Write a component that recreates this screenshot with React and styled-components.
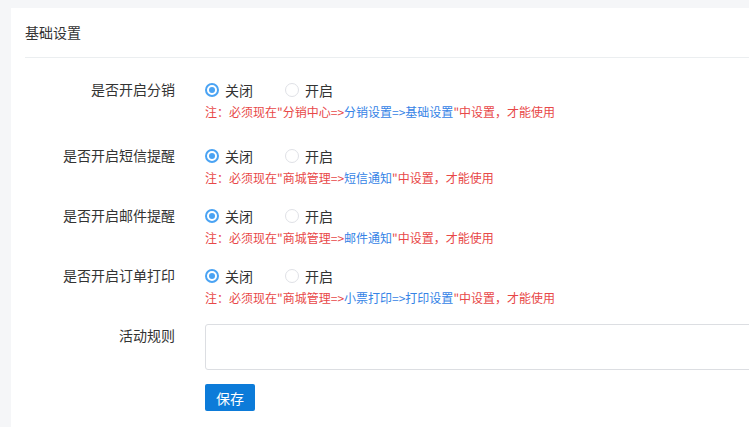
import React from 'react';
import styled, { createGlobalStyle } from 'styled-components';

const GlobalStyle = createGlobalStyle`
  html, body {
    margin: 0;
    padding: 0;
    background: #f5f6f8;
    overflow: hidden;
  }
  body {
    font-family: "Noto Sans CJK SC", "Liberation Sans", sans-serif;
    color: #333;
  }
`;

const Page = styled.div`
  padding: 8px 0 0 11px;
  height: 427px;
  box-sizing: border-box;
`;

const Card = styled.div`
  background: #fff;
  width: 800px;
  height: 100%;
  padding-left: 14px;
  box-sizing: border-box;
`;

const Header = styled.div`
  height: 49px;
  line-height: 49px;
  font-size: 14px;
  color: #333;
  border-bottom: 1px solid #ebeef0;
`;

const Form = styled.div`
  padding-top: 21px;
  display: flex;
  flex-direction: column;
`;

const Row = styled.div`
  display: flex;
  margin-bottom: 17px;

  &:first-child {
    margin-bottom: 23px;
  }
`;

const Label = styled.div`
  width: 180px;
  flex-shrink: 0;
  box-sizing: border-box;
  padding-right: 30px;
  padding-top: ${(p) => p.$offset || 0}px;
  text-align: right;
  font-size: 14px;
  line-height: 20px;
  color: #333;
`;

const Content = styled.div`
  flex: 1;
  display: flex;
  flex-direction: column;
  align-items: flex-start;
`;

const RadioGroup = styled.div`
  display: flex;
  align-items: center;
  height: 22px;
`;

const RadioItem = styled.label`
  display: flex;
  align-items: center;
  gap: 6px;
  margin-right: 32px;
  font-size: 14px;
  color: #333;
  cursor: pointer;
`;

const Dot = styled.span`
  width: 14px;
  height: 14px;
  box-sizing: border-box;
  border-radius: 50%;
  border: ${(p) => (p.$checked ? '2px solid #4aa3f3' : '1px solid #dfe1e6')};
  background: #fff;
  display: flex;
  align-items: center;
  justify-content: center;

  &::after {
    content: '';
    width: 6px;
    height: 6px;
    border-radius: 50%;
    background: ${(p) => (p.$checked ? '#4aa3f3' : 'transparent')};
  }
`;

const Note = styled.div`
  margin-top: 1px;
  font-size: 12px;
  line-height: 20px;
  color: #e84848;
`;

const Link = styled.span`
  color: #3583e6;
`;

const TextArea = styled.textarea`
  display: block;
  width: 600px;
  height: 46px;
  margin: -1px 0 0;
  box-sizing: border-box;
  border: 1px solid #dcdee2;
  border-radius: 3px;
  resize: none;
  outline: none;
  font-family: inherit;
`;

const Actions = styled.div`
  display: flex;
  padding-left: 180px;
  margin-top: -3px;
`;

const SaveButton = styled.button`
  width: 50px;
  height: 27px;
  padding: 0;
  border: none;
  border-radius: 2px;
  background: #0c7bd9;
  color: #fff;
  font-size: 14px;
  font-family: inherit;
  cursor: pointer;
`;

const settings = [
  { label: '是否开启分销', path: ['分销中心', '分销设置', '基础设置'] },
  { label: '是否开启短信提醒', path: ['商城管理', '短信通知'] },
  { label: '是否开启邮件提醒', path: ['商城管理', '邮件通知'] },
  { label: '是否开启订单打印', path: ['商城管理', '小票打印', '打印设置'] },
];

const Radio = ({ checked, children }) => (
  <RadioItem>
    <Dot $checked={checked} />
    {children}
  </RadioItem>
);

const App = () => (
  <Page>
    <GlobalStyle />
    <Card>
      <Header>基础设置</Header>
      <Form>
        {settings.map((s) => (
          <Row key={s.label}>
            <Label>{s.label}</Label>
            <Content>
              <RadioGroup>
                <Radio checked>关闭</Radio>
                <Radio>开启</Radio>
              </RadioGroup>
              <Note>
                注：必须现在"{s.path[0]}=&gt;
                <Link>{s.path.slice(1).join('=>')}</Link>
                "中设置，才能使用
              </Note>
            </Content>
          </Row>
        ))}
        <Row>
          <Label $offset={0}>活动规则</Label>
          <Content>
            <TextArea />
          </Content>
        </Row>
        <Actions>
          <SaveButton>保存</SaveButton>
        </Actions>
      </Form>
    </Card>
  </Page>
);

export default App;
